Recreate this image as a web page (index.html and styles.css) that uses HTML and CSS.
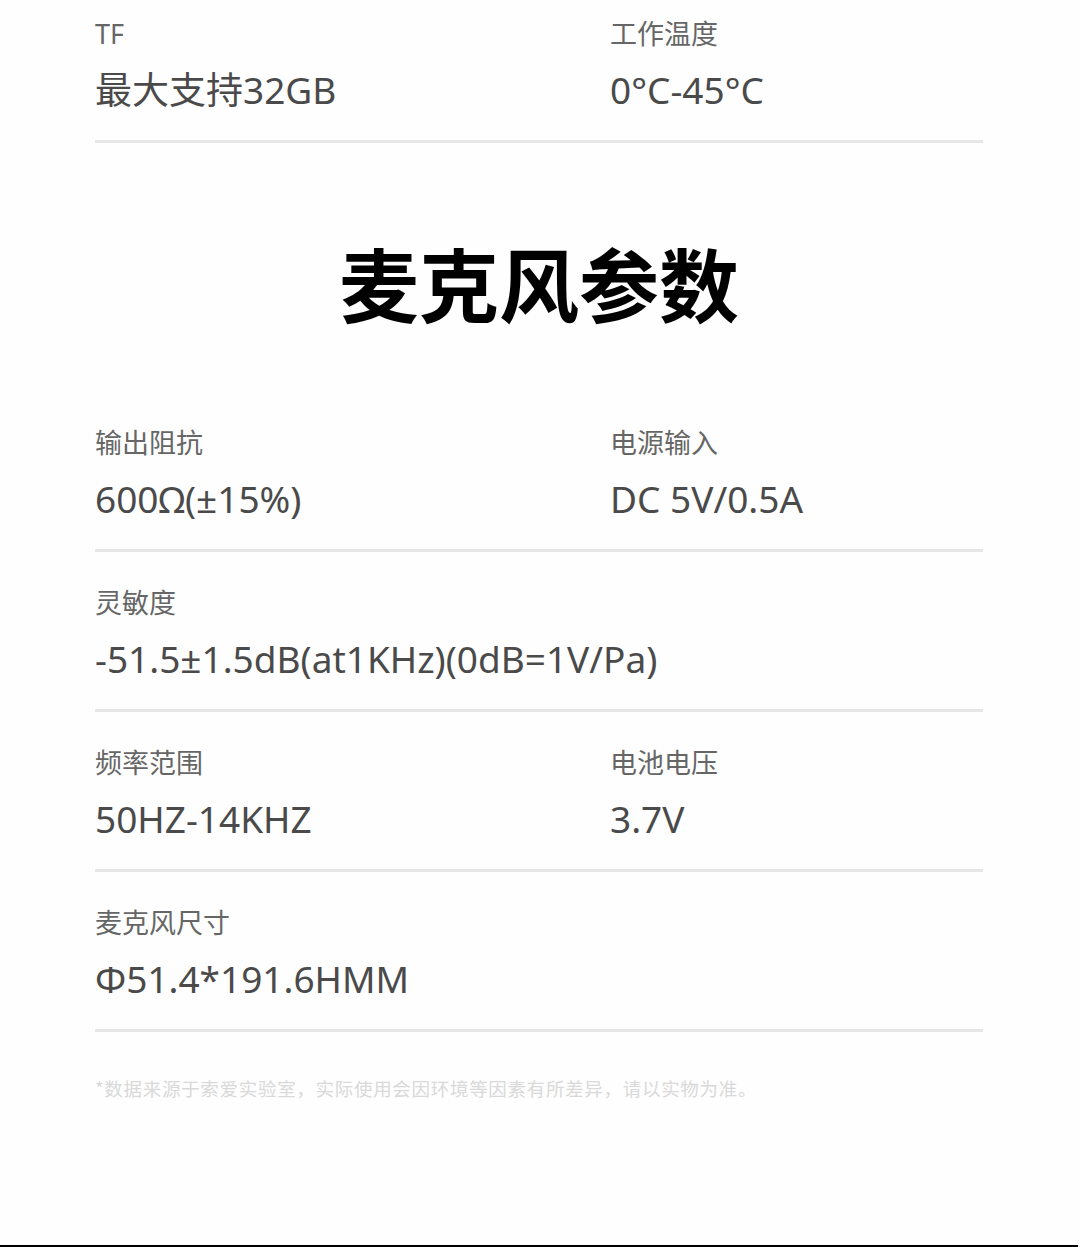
FILE: index.html
```html
<!DOCTYPE html>
<html lang="zh-CN">
<head>
<meta charset="utf-8">
<title>麦克风参数</title>
<link rel="stylesheet" href="styles.css">
</head>
<body>
<div class="page">
  <section class="specs">
    <div class="row row-first">
      <div class="cell">
        <div class="label">TF</div>
        <div class="value">最大支持32GB</div>
      </div>
      <div class="cell">
        <div class="label">工作温度</div>
        <div class="value">0°C-45°C</div>
      </div>
    </div>
  </section>

  <h1 class="heading">麦克风参数</h1>

  <section class="specs">
    <div class="row">
      <div class="cell">
        <div class="label">输出阻抗</div>
        <div class="value">600Ω(±15%)</div>
      </div>
      <div class="cell">
        <div class="label">电源输入</div>
        <div class="value">DC 5V/0.5A</div>
      </div>
    </div>
    <div class="row">
      <div class="cell cell-wide">
        <div class="label">灵敏度</div>
        <div class="value">-51.5±1.5dB(at1KHz)(0dB=1V/Pa)</div>
      </div>
    </div>
    <div class="row">
      <div class="cell">
        <div class="label">频率范围</div>
        <div class="value">50HZ-14KHZ</div>
      </div>
      <div class="cell">
        <div class="label">电池电压</div>
        <div class="value">3.7V</div>
      </div>
    </div>
    <div class="row">
      <div class="cell cell-wide">
        <div class="label">麦克风尺寸</div>
        <div class="value">Φ51.4*191.6HMM</div>
      </div>
    </div>
  </section>

  <p class="note">*数据来源于索爱实验室，实际使用会因环境等因素有所差异，请以实物为准。</p>

  <div class="bottom-rule"></div>
</div>
</body>
</html>
```

FILE: styles.css
```css
* { box-sizing: border-box; }

html, body {
  margin: 0;
  padding: 0;
  background: #fefefe;
}

body {
  font-family: "Noto Sans CJK SC", "Noto Sans", sans-serif;
}

.page {
  height: 1247px;
  display: flex;
  flex-direction: column;
  padding: 0 97px 0 95px;
}

.specs {
  display: flex;
  flex-direction: column;
}

.row {
  display: grid;
  grid-template-columns: 515px 1fr;
  padding: 33px 0 27px;
  border-bottom: 3px solid #e6e6e6;
}

.row-first {
  padding-top: 16px;
}

.cell-wide {
  grid-column: 1 / -1;
}

.label {
  font-family: "Noto Sans", "Noto Sans CJK SC", sans-serif;
  font-size: 27px;
  line-height: 36px;
  color: #666666;
  margin-bottom: 13px;
}

.value {
  font-family: "Noto Sans", "Noto Sans CJK SC", sans-serif;
  font-size: 37px;
  line-height: 48px;
  font-weight: 400;
  color: #4a4a4a;
  white-space: nowrap;
  position: relative;
  top: 1px;
}

.heading {
  margin: 0;
  padding: 90px 0 63px;
  text-align: center;
  font-size: 80px;
  line-height: 96px;
  font-weight: 700;
  color: #000;
}

.note {
  margin: 44px 0 0;
  font-size: 18.5px;
  line-height: 24px;
  letter-spacing: 0.7px;
  color: #d9d9d9;
}

.bottom-rule {
  margin: auto -95px 0;
  height: 2px;
  background: #000;
}
```
